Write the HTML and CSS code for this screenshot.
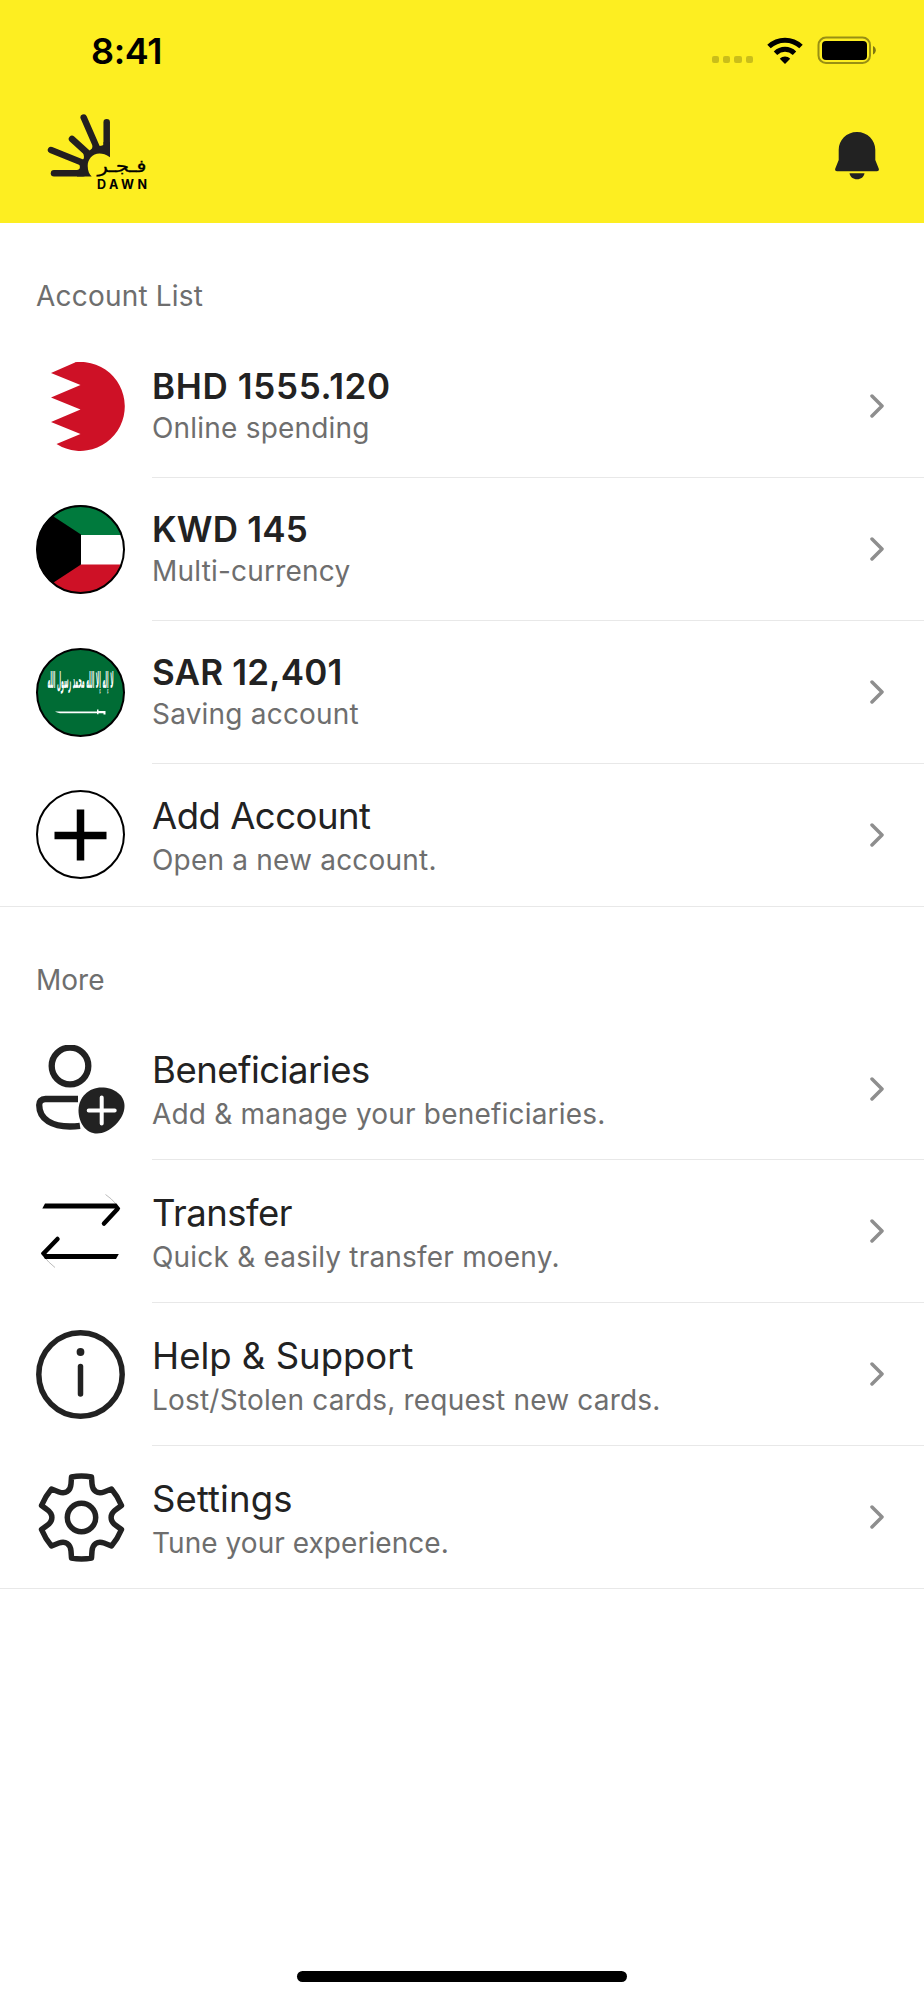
FILE: index.html
```html
<!DOCTYPE html>
<html lang="en">
<head>
  <meta charset="UTF-8">
  <title>Dawn - Accounts</title>
  <link rel="stylesheet" href="styles.css">
</head>
<body>
  <header class="header">
    <div class="status-bar">
      <span class="time">8:41</span>
      <div class="status-icons">
        <div class="signal"><i></i><i></i><i></i><i></i></div>
        <svg class="wifi" width="36" height="27" viewBox="0 0 36 27">
          <g fill="none" stroke="#000" stroke-width="5">
            <path d="M2 9.500C11 1 25 1 34 9.500"/>
            <path d="M8.500 16.200C14 11 22 11 27.500 16.200"/>
          </g>
          <path d="M18 27l-5.200-5.300c3-2.800 7.400-2.800 10.400 0z"/>
        </svg>
        <svg class="battery" width="59" height="28" viewBox="0 0 59 28">
          <rect x="1.500" y="1.500" width="51.500" height="25.500" rx="7.500" fill="none" stroke="#000" stroke-opacity="0.4" stroke-width="2"/>
          <rect x="5" y="5" width="45" height="19" rx="4"/>
          <path d="M56 10c3.700 1.500 3.700 7 0 8.500z" fill-opacity="0.5"/>
        </svg>
      </div>
    </div>
    <div class="nav">
      <svg class="logo" width="102" height="80" viewBox="0 0 102 80">
        <g stroke="#231f20" stroke-width="6.500" stroke-linecap="round" fill="none">
          <path d="M59.700 8.300V34"/>
          <path d="M36.700 3.500L50 34"/>
          <path d="M25 25L41.500 40"/>
          <path d="M4 36L35 48.500"/>
          <path d="M7 59.300H36"/>
        </g>
        <path d="M63 28V43.300C50 34.500 40.700 43 40.700 52C40.700 57 42.500 60.500 44.700 62.500H30V56Q34 55.500 32.500 51L31 47Q37 47 37 43L36 37Q42 38.500 45 34.500L46 30Q51 33.500 56.500 31V28z" fill="#231f20"/>
        <text class="logo-ar" transform="translate(50.500 57.500) scale(1 0.850)" direction="ltr" textLength="49" lengthAdjust="spacingAndGlyphs">فـجـر</text>
        <text class="logo-en" x="50" y="75" textLength="50">DAWN</text>
      </svg>
      <svg class="bell" width="44" height="48" viewBox="0 0 44 48" fill="#222">
        <path d="M22 0C11.500 0 3.700 8 3.700 18v10L0.300 36.500C-0.300 38 0.500 39.200 2 39.200h40c1.500 0 2.300-1.200 1.700-2.700L40.300 28V18C40.300 8 32.500 0 22 0z"/>
        <path d="M14.500 41.300h15c-.6 3.700-3.500 6-7.500 6s-6.900-2.300-7.500-6z"/>
      </svg>
    </div>
  </header>

  <main>
    <section>
      <h2>Account List</h2>
      <a class="row bold">
        <svg class="icon" viewBox="0 0 89 89">
          <path d="M39 .5L15 11L44.500 23L15 35.500L44.500 47.500L15 60L44.500 72L20.500 82A44.500 44.500 0 1 0 39 .2z" fill="#ce1126"/>
        </svg>
        <div class="content">
          <div class="text"><h3 class="bhd">BHD 1555.120</h3><p>Online spending</p></div>
          <svg class="chevron" viewBox="0 0 14 24"><path d="M2 2l10 10L2 22"/></svg>
        </div>
      </a>
      <a class="row bold">
        <svg class="icon" viewBox="0 0 89 89">
          <clipPath id="round"><circle cx="44.500" cy="44.500" r="44"/></clipPath>
          <g clip-path="url(#round)">
            <path d="M0 0h89v30H0z" fill="#007a3d"/>
            <path d="M0 30h89v30H0z" fill="#fff"/>
            <path d="M0 59.500h89V89H0z" fill="#ce1126"/>
            <path d="M0 0L45 29.500v30L0 89z"/>
          </g>
          <circle cx="44.500" cy="44.500" r="43.500" fill="none" stroke="#000" stroke-width="2"/>
        </svg>
        <div class="content">
          <div class="text"><h3>KWD 145</h3><p>Multi-currency</p></div>
          <svg class="chevron" viewBox="0 0 14 24"><path d="M2 2l10 10L2 22"/></svg>
        </div>
      </a>
      <a class="row bold">
        <svg class="icon" viewBox="0 0 89 89">
          <circle cx="44.500" cy="44.500" r="43.500" fill="#006c35" stroke="#000" stroke-width="2"/>
          <text class="shahada" transform="translate(44.500 39.500) scale(0.450 2)" text-anchor="middle" textLength="147" lengthAdjust="spacingAndGlyphs">لا إله إلا الله محمد رسول الله</text>
          <path d="M19 63.500h42v-2h1.500v1.500h7v3.500h-2v-1.200h-5v1h-1.500v-1H26c-3 0-5-.6-7-1.800z" fill="#fff"/>
        </svg>
        <div class="content">
          <div class="text"><h3>SAR 12,401</h3><p>Saving account</p></div>
          <svg class="chevron" viewBox="0 0 14 24"><path d="M2 2l10 10L2 22"/></svg>
        </div>
      </a>
      <a class="row last">
        <svg class="icon" viewBox="0 0 89 89">
          <circle cx="44.500" cy="44.500" r="43.500" fill="#fff" stroke="#000" stroke-width="2"/>
          <path d="M44.500 19.500v51M18.500 45.500h52" stroke="#000" stroke-width="7.500"/>
        </svg>
        <div class="content">
          <div class="text"><h3>Add Account</h3><p>Open a new account.</p></div>
          <svg class="chevron" viewBox="0 0 14 24"><path d="M2 2l10 10L2 22"/></svg>
        </div>
      </a>
    </section>

    <section class="more">
      <h2>More</h2>
      <a class="row">
        <svg class="icon line" viewBox="0 0 89 89">
          <g stroke-width="6.300">
            <circle cx="34" cy="21" r="18.300"/>
            <path class="butt" d="M42 54H9.500C5 54 3.200 56.500 3.200 60C3.200 75 17 81.500 34 81.500q5 0 10-.7"/>
          </g>
          <path d="M65.500 42.500C78 42.500 88.500 50 88.500 61C88.500 75 73 88.500 61 88.500C50 88.500 42.500 78 42.500 65.500C42.500 52 53 42.500 65.500 42.500z" fill="#222" stroke="none"/>
          <path d="M65.700 52.500v26M52.700 65.500h26" stroke="#fff" stroke-width="4"/>
        </svg>
        <div class="content">
          <div class="text"><h3>Beneficiaries</h3><p>Add &amp; manage your beneficiaries.</p></div>
          <svg class="chevron" viewBox="0 0 14 24"><path d="M2 2l10 10L2 22"/></svg>
        </div>
      </a>
      <a class="row">
        <svg class="icon" viewBox="0 0 89 89">
          <path d="M69.500 7.500Q75 11 81 18M8 69.500Q12 75 19 80.500" fill="none" stroke="#bbb"/>
          <path d="M9 16.500h71.500l3.800 5-2.300 1.800-3.500-1.800H6.300z"/>
          <path d="M81.500 22L68 36.500M7.500 66.500L21.500 52" stroke="#000" stroke-width="4.500" stroke-linecap="round"/>
          <path d="M80 72H9L5 66l2-1.500 4 2.500h71.800z"/>
        </svg>
        <div class="content">
          <div class="text"><h3>Transfer</h3><p>Quick &amp; easily transfer moeny.</p></div>
          <svg class="chevron" viewBox="0 0 14 24"><path d="M2 2l10 10L2 22"/></svg>
        </div>
      </a>
      <a class="row">
        <svg class="icon line" viewBox="0 0 89 89">
          <circle cx="44.500" cy="44.500" r="41.700"/>
          <path d="M44.500 36.500v27.500"/>
          <circle cx="44.500" cy="22" r="3.900" fill="#222" stroke="none"/>
        </svg>
        <div class="content">
          <div class="text"><h3 class="help">Help &amp; Support</h3><p>Lost/Stolen cards, request new cards.</p></div>
          <svg class="chevron" viewBox="0 0 14 24"><path d="M2 2l10 10L2 22"/></svg>
        </div>
      </a>
      <a class="row last">
        <svg class="icon line" viewBox="0 0 89 89">
          <circle cx="45.500" cy="44.500" r="14.200"/>
          <path d="M35.500 4Q45.500 1.800 55.500 4L56 11C56.500 18 61.500 21.500 68 19L75.500 16Q81.500 23 85.500 32.500L80 36.500C73.500 41 73.500 48 80 52.500L85.500 56.500Q81.500 66 75.500 73L68 70C61.500 67.500 56.500 71 56 78L55.500 85Q45.500 87.200 35.500 85L35 78C34.500 71 29.500 67.500 23 70L15.500 73Q9.500 66 5.500 56.500L11 52.500C17.500 48 17.500 41 11 36.500L5.500 32.500Q9.500 23 15.500 16L23 19C29.500 21.500 34.500 18 35 11z"/>
        </svg>
        <div class="content">
          <div class="text"><h3 class="settings">Settings</h3><p class="tune">Tune your experience.</p></div>
          <svg class="chevron" viewBox="0 0 14 24"><path d="M2 2l10 10L2 22"/></svg>
        </div>
      </a>
    </section>
  </main>

  <div class="home-indicator"></div>
</body>
</html>
```
FILE: styles.css
```css
* {
  margin: 0;
  padding: 0;
  box-sizing: border-box;
}

body {
  height: 2000px;
  display: flex;
  flex-direction: column;
  align-items: stretch;
  background: #fff;
  color: #222;
  font-family: Inter, "Liberation Sans", sans-serif;
}

.header {
  height: 223px;
  background: #fdee21;
}

.status-bar {
  display: flex;
  justify-content: space-between;
  height: 114px;
  padding: 0 48px 0 91px;
}

.time {
  padding-top: 29px;
  font-size: 36px;
  line-height: 44px;
  font-weight: 600;
  letter-spacing: -0.4px;
  color: #000;
}

.status-icons {
  display: flex;
  align-items: flex-start;
  padding-top: 36px;
}

.signal {
  display: flex;
  gap: 4px;
  margin: 20px 14px 0 0;
}

.signal i {
  width: 7.300px;
  height: 7px;
  border-radius: 2px;
  background: rgba(0, 0, 0, 0.2);
}

.wifi {
  margin: 1px 14px 0 0;
}

.nav {
  display: flex;
  justify-content: space-between;
  padding: 0 45px 0 47px;
}

.bell {
  margin-top: 18px;
}

.logo-ar {
  font-family: "DejaVu Sans", sans-serif;
  font-size: 21px;
  stroke: #000;
  stroke-width: 0.3;
}

.logo-en {
  font-size: 12.500px;
  font-weight: 700;
}

.shahada {
  font-family: "DejaVu Sans", sans-serif;
  font-size: 11px;
  font-weight: 700;
  fill: #fff;
}

h2 {
  height: 112px;
  padding: 56px 36px 0;
  font-size: 28px;
  line-height: 34px;
  font-weight: 400;
  letter-spacing: 0.2px;
  color: #6e6e6e;
}

.more h2 {
  height: 111px;
  letter-spacing: 0;
}

.row {
  display: flex;
  align-items: center;
  height: 142.900px;
  padding-left: 36px;
}

.row.last {
  border-bottom: 1px solid #e8e8e8;
}

.icon {
  width: 89px;
  height: 89px;
  margin-right: 27px;
}

.line {
  fill: none;
  stroke: #222;
  stroke-width: 5.500;
  stroke-linecap: round;
  stroke-linejoin: round;
}

.line .butt {
  stroke-linecap: butt;
}

.content {
  flex: 1;
  height: 100%;
  display: flex;
  align-items: center;
  justify-content: space-between;
  padding-right: 40px;
  border-bottom: 1px solid #e8e8e8;
}

.row.last .content {
  border-bottom: none;
}

.text {
  padding-top: 5px;
}

.bold .text {
  padding-top: 3px;
}

h3 {
  font-size: 36.500px;
  line-height: 46px;
  font-weight: 400;
  letter-spacing: -0.5px;
}

.bold h3 {
  font-size: 35px;
  line-height: 42px;
  font-weight: 600;
  letter-spacing: 0.2px;
}

.bold h3.bhd {
  letter-spacing: 0.650px;
}

.help {
  letter-spacing: 0;
}

.settings {
  letter-spacing: 0.100px;
}

p {
  font-size: 28px;
  line-height: 42px;
  letter-spacing: 0.2px;
  color: #6e6e6e;
}

.tune {
  letter-spacing: 0.050px;
}

.chevron {
  width: 14px;
  height: 24px;
  fill: none;
  stroke: #8e8e8e;
  stroke-width: 3.500;
  stroke-linecap: round;
  stroke-linejoin: round;
}

.home-indicator {
  width: 330px;
  height: 11px;
  margin: auto auto 18px;
  border-radius: 6px;
  background: #000;
}
```
